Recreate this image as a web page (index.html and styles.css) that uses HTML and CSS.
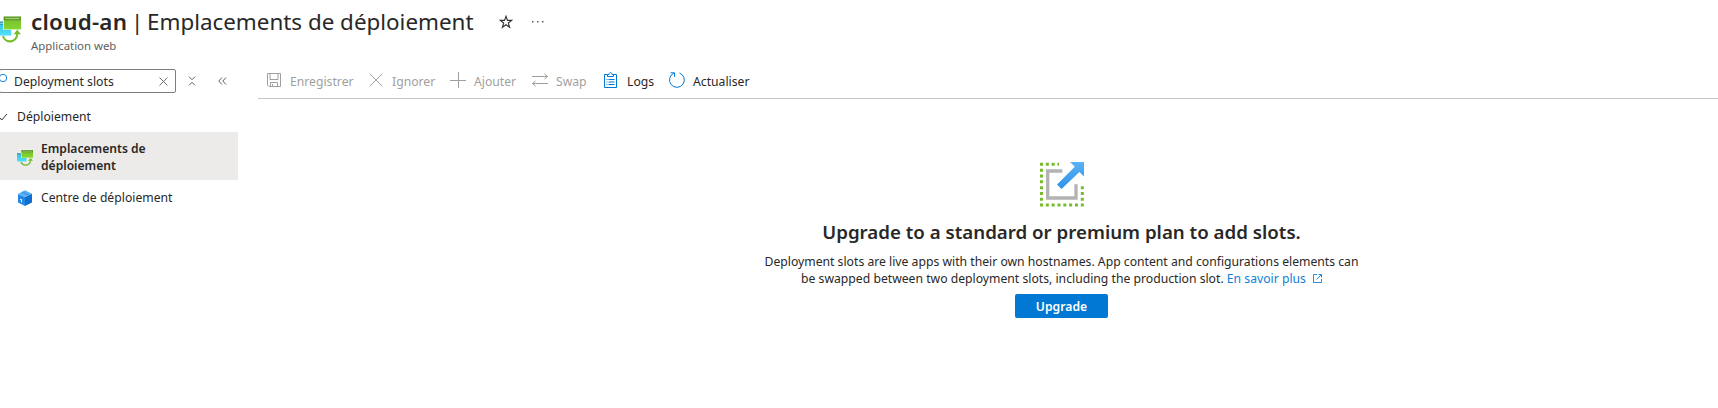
FILE: index.html
```html
<!DOCTYPE html>
<html lang="fr">
<head>
<meta charset="utf-8">
<title>cloud-an | Emplacements de déploiement</title>
<link rel="stylesheet" href="styles.css">
</head>
<body>
<svg width="0" height="0" class="defs" aria-hidden="true">
  <defs>
    <linearGradient id="green" x1="0" y1="0" x2="0" y2="1"><stop offset="0" stop-color="#76bc2d"/><stop offset="1" stop-color="#86d633"/></linearGradient>
    <linearGradient id="cyan" x1="0" y1="0" x2="0" y2="1"><stop offset="0" stop-color="#32bedd"/><stop offset="1" stop-color="#50e0ff"/></linearGradient>
    <linearGradient id="arrow" x1="0" y1="1" x2="0" y2="0"><stop offset="0" stop-color="#2f92e8"/><stop offset="1" stop-color="#5ab2f6"/></linearGradient>
    <symbol id="slots" viewBox="0 0 32 34" preserveAspectRatio="none">
      <path d="M0 8h19v17H0z" fill="url(#cyan)"/><path d="M0 8h9v4H0z" fill="#2b9db8"/><path d="M1 9.500h8v1.200H1z" fill="#9fd6e4"/>
      <path d="M8 1.500h24v16.500H8z" fill="#fff"/>
      <path d="M9 2h23v15.500H9z" fill="url(#green)"/><path d="M9 2h23v4.500H9z" fill="#5e9624"/><path d="M11 3.500h19v1.500H11z" fill="#a4cb80"/>
      <path d="M8 25.500c3 9.500 19 9 19-3.500" fill="none" stroke="#76bc2d" stroke-width="2.700"/><path d="M27 18l5 5.500H22z" fill="#76bc2d"/>
    </symbol>
  </defs>
</svg>
<header class="header">
  <svg class="header-icon"><use href="#slots"/></svg>
  <div>
    <div class="title-row">
      <h1 class="title"><strong class="title-name">cloud-an</strong><span class="title-bar">|</span><span>Emplacements de déploiement</span></h1>
      <svg class="star" viewBox="0 0 14 14"><path d="M7 1.300l1.450 4.100h4.250L9.300 8l1.300 4.300L7 9.750 3.400 12.300 4.700 8 1.300 5.400h4.250z"/></svg>
      <svg class="dots" viewBox="0 0 12 4"><path d="M0 1h1.500v1.500H0zM5 1h1.500v1.500H5zM10 1h1.500v1.500H10z"/></svg>
    </div>
    <div class="subtitle">Application web</div>
  </div>
</header>
<div class="body">
  <nav class="sidebar">
    <div class="search-row">
      <div class="search">
        <svg class="lens" viewBox="0 0 8 10"><circle cx="3" cy="4" r="3.700"/></svg>
        <span class="search-text">Deployment slots</span>
        <svg class="clear" viewBox="0 0 9 9"><path d="M.5.500l8 8M8.500.500l-8 8"/></svg>
      </div>
      <svg class="collapse" viewBox="0 0 8 10"><path d="M1 .700l3 3 3-3M1 9.300l3-3 3 3"/></svg>
      <svg class="chevrons" viewBox="0 0 9 8"><path d="M4 .500L.8 4 4 7.500M8 .500L4.800 4 8 7.500"/></svg>
    </div>
    <div class="group">
      <svg class="check" viewBox="0 0 8 8"><path d="M0 5l1.800 2L7 1"/></svg>
      <span class="group-text">Déploiement</span>
    </div>
    <div class="item item-active">
      <svg class="item-icon item-icon-slots"><use href="#slots"/></svg>
      <span class="item-bold">Emplacements de<br>déploiement</span>
    </div>
    <div class="item">
      <svg class="item-icon" viewBox="0 0 16 16"><path d="M1 4L8 7v9l-7-3.600z" fill="#2489e2"/><path d="M15 3.700L8 7v9l7-3.600z" fill="#0f6fd0"/><path d="M1 4L8 .200l7 3.500L8 7z" fill="#5ab0f3"/><path d="M4.200 2.300l7 3.300 1.500-.800-6.900-3.400z" fill="#3b98ea"/><path d="M3 8.700l2 .800v3l-.9-.400V10L3 9.700z" fill="#fff"/></svg>
      <span class="item-text">Centre de déploiement</span>
    </div>
  </nav>
  <main class="main">
    <div class="toolbar">
      <div class="cmd off cmd-save"><svg class="cmd-icon" viewBox="0 0 16 16"><path d="M1.500 1.500h13v13H3l-1.500-1.500zM4 1.500v6h8v-6M4.500 14.500v-4h7v4M6.500 12v2.500"/></svg><span>Enregistrer</span></div>
      <div class="cmd off cmd-discard"><svg class="cmd-icon" viewBox="0 0 16 16"><path d="M2 2l12 12M14 2L2 14"/></svg><span>Ignorer</span></div>
      <div class="cmd off cmd-add"><svg class="cmd-icon" viewBox="0 0 16 16"><path d="M8.500 0v16M0 8.500h16"/></svg><span>Ajouter</span></div>
      <div class="cmd off cmd-swap"><svg class="cmd-icon" viewBox="0 0 16 16"><path d="M0 4.500h15.500M12.500 2l3 2.500-3 2.500M16 11.500H.500M3.500 9l-3 2.500 3 2.500"/></svg><span>Swap</span></div>
      <div class="cmd cmd-logs"><svg class="cmd-icon" viewBox="0 0 16 16"><path d="M4.500 2.500h-3v13h12v-13h-3M4.500 4.500v-2h1.500c0-2.500 3-2.500 3 0h1.500v2zM3.500 7.500h1M5.500 7.500h6M3.500 10h1M5.500 10h6M3.500 12.500h1M5.500 12.500h6"/></svg><span>Logs</span></div>
      <div class="cmd cmd-refresh"><svg class="cmd-icon" viewBox="0 0 16 16"><path d="M10.500 1A7.400 7.400 0 1 1 4.800 1.200M1.500.800h4v4"/></svg><span>Actualiser</span></div>
    </div>
    <section class="empty">
      <svg class="empty-icon" viewBox="0 0 45 45">
        <path d="M0 2.300H19" class="sq"/><path d="M1.500 6.700V40" class="sq"/><path d="M0 43H44" class="sq"/><path d="M42.300 24.200V39" class="sq"/>
        <path d="M22.300 9H7.700v27H36V22.300" fill="none" stroke="#b3b3b3" stroke-width="3.300"/>
        <path d="M30 0H44v14.500l-4.600-4.600L21.500 27 17 22.500 34.800 4.800z" fill="url(#arrow)"/>
      </svg>
      <h2 class="empty-title">Upgrade to a standard or premium plan to add slots.</h2>
      <p class="empty-text">Deployment slots are live apps with their own hostnames. App content and configurations elements can<br>be swapped between two deployment slots, including the production slot. <a class="link">En savoir plus</a><svg class="ext" viewBox="0 0 9 9"><path d="M4 .500H.500v8h8V5M5.500.500h3v3M8.500.500L3.500 5.500"/></svg></p>
      <button class="button">Upgrade</button>
    </section>
  </main>
</div>
</body>
</html>
```
FILE: styles.css
```css
* { box-sizing: border-box; }
body { margin: 0; height: 408px; overflow: hidden; background: #fff; color: #292827; font-family: "Noto Sans", "Open Sans", sans-serif; font-size: 12.2px; }
svg { display: block; flex: none; fill: none; }
.defs { position: absolute; }
.header { display: flex; height: 60px; }
.header-icon { width: 24px; height: 28px; margin: 15px 10px 0 -3px; }
.title-row { display: flex; align-items: center; height: 30px; margin-top: 7px; }
.title { display: flex; margin: 0; width: 468px; font-size: 22.4px; line-height: 30px; font-weight: 400; white-space: nowrap; }
.title-name { width: 96px; font-weight: 600; letter-spacing: .25px; }
.title-bar { width: 20px; padding-left: 4px; }
.star { width: 14px; height: 14px; stroke: #323130; stroke-width: 1.1; }
.dots { width: 12px; height: 4px; margin-left: 19px; fill: #605e5c; }
.subtitle { font-size: 11.4px; line-height: 18px; color: #605e5c; }
.body { display: flex; }
.sidebar { width: 238px; flex: none; padding-top: 9px; }
.search-row { display: flex; align-items: center; height: 24px; }
.search { display: flex; flex: none; align-items: center; width: 177px; height: 24px; margin-left: -1px; border: 1px solid #807e7c; border-radius: 2px; }
.lens { width: 8px; height: 10px; margin-top: -4px; stroke: #1683d8; }
.search-text { width: 151px; padding-left: 6px; white-space: nowrap; }
.clear { width: 9px; height: 9px; stroke: #605e5c; stroke-width: .9; }
.collapse { width: 8px; height: 10px; margin-left: 12px; stroke: #605e5c; }
.chevrons { width: 9px; height: 8px; margin-left: 22px; stroke: #605e5c; }
.group { display: flex; align-items: center; height: 39px; padding-top: 8px; }
.check { width: 8px; height: 8px; margin-right: 9px; stroke: #323130; }
.item { display: flex; align-items: center; height: 35px; padding-left: 17px; line-height: 17px; gap: 8px; }
.item-active { height: 48px; padding-top: 2px; background: #edebe9; }
.item-icon { width: 16px; height: 16px; }
.item-icon-slots { height: 17px; }
.item-bold { font-size: 12.1px; font-weight: 600; }
.main { flex: 1; min-width: 0; margin-left: 20px; }
.toolbar { display: flex; align-items: center; height: 39px; padding: 5px 0 0 8px; border-bottom: 1px solid #c8c6c4; }
.cmd { display: flex; align-items: center; gap: 8px; white-space: nowrap; }
.cmd-icon { width: 16px; height: 16px; stroke: #0078d4; margin-top: -4px; }
.off { color: #a19f9d; }
.off .cmd-icon { stroke: #a19f9d; }
.cmd-save { width: 102px; }
.cmd-discard { width: 82px; }
.cmd-add { width: 82px; }
.cmd-swap { width: 71px; }
.cmd-logs { width: 66px; }
.empty { display: flex; flex-direction: column; align-items: center; padding: 63px 0 0 147px; }
.empty-icon { width: 45px; height: 45px; margin-left: 2px; }
.sq { stroke: #76bc2d; stroke-width: 3; stroke-dasharray: 3 2.83; }
.empty-title { margin: 11px 0 0; font-size: 18.7px; line-height: 28px; font-weight: 600; white-space: nowrap; }
.empty-text { margin: 7px 0 0; line-height: 17px; text-align: center; white-space: nowrap; }
.link { color: #0f7fd6; }
.ext { display: inline-block; width: 9px; height: 9px; margin-left: 7px; stroke: #0f7fd6; stroke-width: .9; }
.button { width: 93px; height: 24px; margin-top: 7px; padding: 2px 0 0; border: 0; border-radius: 2px; background: #0078d4; color: #fff; font: 600 12.2px/22px "Noto Sans", sans-serif; }
```
